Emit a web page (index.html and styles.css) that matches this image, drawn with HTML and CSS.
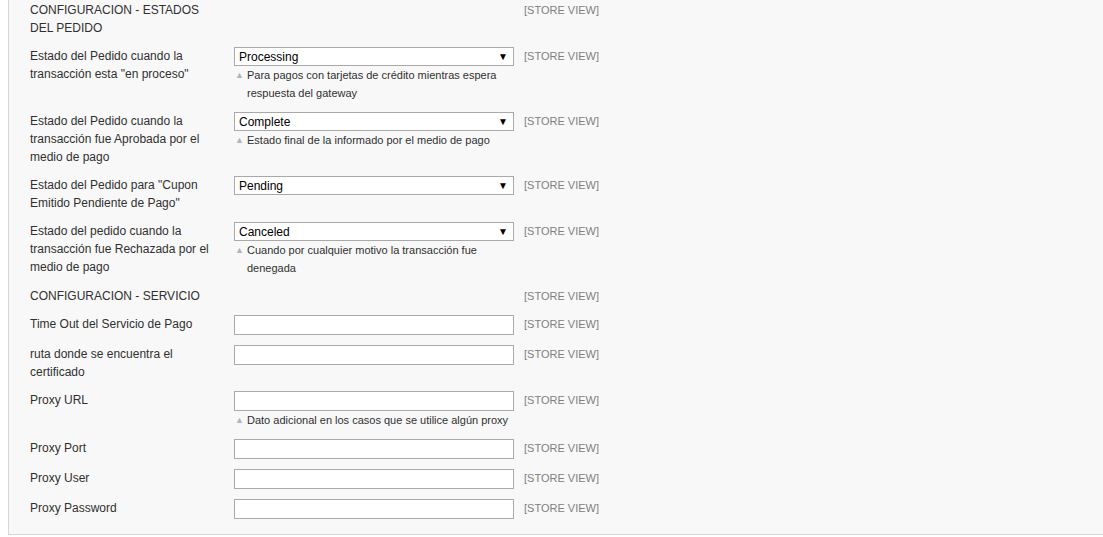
FILE: index.html
```html
<!DOCTYPE html>
<html lang="es">
<head>
<meta charset="utf-8">
<title>Configuración</title>
<link rel="stylesheet" href="styles.css">
</head>
<body>
<div class="panel">
  <div class="row heading first">
    <div class="label">CONFIGURACION - ESTADOS DEL PEDIDO</div>
    <div class="field"></div>
    <div class="scope">[STORE VIEW]</div>
  </div>

  <div class="row">
    <div class="label">Estado del Pedido cuando la transacción esta "en proceso"</div>
    <div class="field">
      <div class="select"><span class="sel-text">Processing</span><span class="arrow">▼</span></div>
      <div class="hint"><span class="tri">▲</span><span class="hint-text">Para pagos con tarjetas de crédito mientras espera respuesta del gateway</span></div>
    </div>
    <div class="scope">[STORE VIEW]</div>
  </div>

  <div class="row">
    <div class="label">Estado del Pedido cuando la transacción fue Aprobada por el medio de pago</div>
    <div class="field">
      <div class="select"><span class="sel-text">Complete</span><span class="arrow">▼</span></div>
      <div class="hint"><span class="tri">▲</span><span class="hint-text">Estado final de la informado por el medio de pago</span></div>
    </div>
    <div class="scope">[STORE VIEW]</div>
  </div>

  <div class="row">
    <div class="label">Estado del Pedido para "Cupon Emitido Pendiente de Pago"</div>
    <div class="field">
      <div class="select"><span class="sel-text">Pending</span><span class="arrow">▼</span></div>
    </div>
    <div class="scope">[STORE VIEW]</div>
  </div>

  <div class="row">
    <div class="label">Estado del pedido cuando la transacción fue Rechazada por el medio de pago</div>
    <div class="field">
      <div class="select"><span class="sel-text">Canceled</span><span class="arrow">▼</span></div>
      <div class="hint"><span class="tri">▲</span><span class="hint-text">Cuando por cualquier motivo la transacción fue denegada</span></div>
    </div>
    <div class="scope">[STORE VIEW]</div>
  </div>

  <div class="row heading second">
    <div class="label">CONFIGURACION - SERVICIO</div>
    <div class="field"></div>
    <div class="scope">[STORE VIEW]</div>
  </div>

  <div class="row">
    <div class="label">Time Out del Servicio de Pago</div>
    <div class="field"><input class="input" type="text"></div>
    <div class="scope">[STORE VIEW]</div>
  </div>

  <div class="row">
    <div class="label">ruta donde se encuentra el certificado</div>
    <div class="field"><input class="input" type="text"></div>
    <div class="scope">[STORE VIEW]</div>
  </div>

  <div class="row">
    <div class="label">Proxy URL</div>
    <div class="field">
      <input class="input" type="text">
      <div class="hint"><span class="tri">▲</span><span class="hint-text">Dato adicional en los casos que se utilice algún proxy</span></div>
    </div>
    <div class="scope">[STORE VIEW]</div>
  </div>

  <div class="row">
    <div class="label">Proxy Port</div>
    <div class="field"><input class="input" type="text"></div>
    <div class="scope">[STORE VIEW]</div>
  </div>

  <div class="row">
    <div class="label">Proxy User</div>
    <div class="field"><input class="input" type="text"></div>
    <div class="scope">[STORE VIEW]</div>
  </div>

  <div class="row last">
    <div class="label">Proxy Password</div>
    <div class="field"><input class="input" type="password"></div>
    <div class="scope">[STORE VIEW]</div>
  </div>
</div>
</body>
</html>
```

FILE: styles.css
```css
html, body {
  margin: 0;
  padding: 0;
  background: #ffffff;
}

body {
  font-family: "Liberation Sans", Arial, sans-serif;
  font-size: 12px;
  color: #303030;
}

.panel {
  margin-left: 8px;
  border-left: 1px solid #d6d6d6;
  border-bottom: 1px solid #d6d6d6;
  background: #f8f8f8;
  padding: 1px 0 15px 21px;
}

.row {
  display: grid;
  grid-template-columns: 204px 280px auto;
  margin-bottom: 10px;
}

.row.first {
  margin-bottom: 10px;
}

.row.second {
  margin-bottom: 10px;
}

.row.last {
  margin-bottom: 0;
}

.row .label {
  line-height: 18px;
  padding-right: 18px;
}

.row .field {
  grid-column: 2;
  width: 280px;
}

.row .scope {
  grid-column: 3;
  margin-left: 10px;
  font-size: 11px;
  color: #808080;
  line-height: 18px;
  white-space: nowrap;
}

.select {
  box-sizing: border-box;
  height: 19px;
  width: 280px;
  border: 1px solid #a9a9a9;
  background: #ffffff;
  display: flex;
  align-items: center;
  justify-content: space-between;
  padding: 0 4px;
  color: #000000;
  font-size: 12px;
}

.select .arrow {
  font-size: 10px;
  color: #000000;
  margin-right: 1px;
}

.input {
  display: block;
  box-sizing: border-box;
  height: 20px;
  width: 280px;
  margin: 0;
  border: 1px solid #aaaaaa;
  background: #ffffff;
  padding: 0 4px;
  font-family: "Liberation Sans", Arial, sans-serif;
  font-size: 12px;
  border-radius: 0;
  outline: none;
}

.hint {
  display: flex;
  font-size: 11px;
  line-height: 18px;
  color: #303030;
}

.hint .tri {
  flex: 0 0 13px;
  font-size: 9px;
  color: #b4b4b4;
  padding-left: 1px;
  box-sizing: border-box;
}

.hint .hint-text {
  flex: 1;
}
```
